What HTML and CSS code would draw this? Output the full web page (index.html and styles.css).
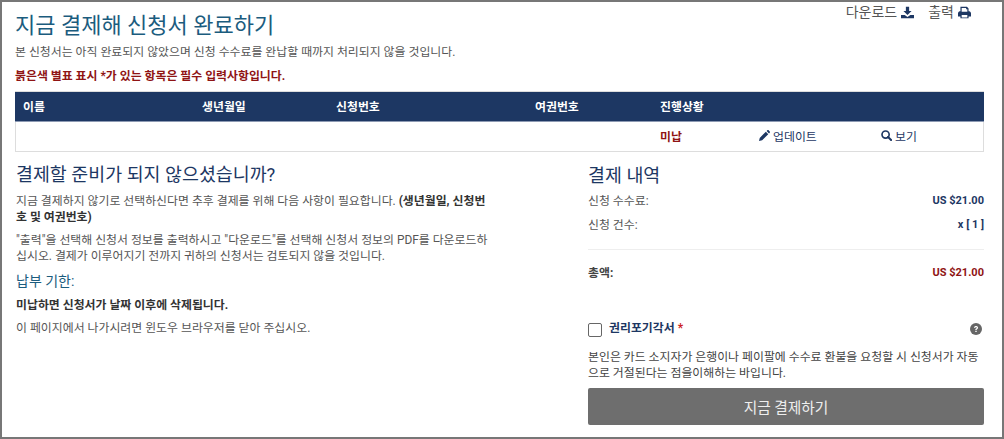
FILE: index.html
```html
<!DOCTYPE html>
<html lang="ko">
<head>
    <meta charset="UTF-8">
    <meta name="viewport" content="width=device-width, initial-scale=1.0">
    <title>지금 결제해 신청서 완료하기</title>
    <link rel="stylesheet" href="styles.css">
</head>
<body>
    <div class="page">
        <div class="tools">
            <a class="tool">다운로드
                <svg class="tool-icon" viewBox="0 0 16 16"><path d="M6 1h4v5h3l-5 5-5-5h3z"/><path d="M0 11h4.500l3.500 2.500 3.500-2.500H16v4H0z"/></svg>
            </a>
            <a class="tool">출력
                <svg class="tool-icon" viewBox="0 0 16 16"><path fill-rule="evenodd" d="M3 1h8l2 2v3.500c1.500 0 3 .8 3 2.500v4h-3v2H3v-2H0V9c0-1.700 1.500-2.500 3-2.500zM4.500 2.500V7h7V4h-1.500V2.500zM4.500 11v3h7v-3z"/></svg>
            </a>
        </div>
        <h1>지금 결제해 신청서 완료하기</h1>
        <p class="intro">본 신청서는 아직 완료되지 않았으며 신청 수수료를 완납할 때까지 처리되지 않을 것입니다.</p>
        <p class="required-note">붉은색 별표 표시 *가 있는 항목은 필수 입력사항입니다.</p>

        <div class="app-table">
            <div class="app-row app-head">
                <span>이름</span>
                <span>생년월일</span>
                <span>신청번호</span>
                <span>여권번호</span>
                <span>진행상황</span>
                <span></span>
                <span></span>
            </div>
            <div class="app-row app-body">
                <span></span>
                <span></span>
                <span></span>
                <span></span>
                <span class="unpaid">미납</span>
                <a class="row-link">
                    <svg class="row-icon" viewBox="0 0 12 12"><path d="M0 12l.8-3.400L7.500 1.900l2.600 2.600-6.700 6.700zM8.300 1.100l.8-.8c.4-.4 1-.4 1.400 0l1.200 1.200c.4.400.4 1 0 1.400l-.8.8z"/></svg>
                    업데이트
                </a>
                <a class="row-link">
                    <svg class="row-icon" viewBox="0 0 12 12"><circle cx="5" cy="5" r="3.900" fill="none" stroke="currentColor" stroke-width="1.800"/><path d="M7.700 7.700L11 11" stroke="currentColor" stroke-width="2.200" stroke-linecap="round"/></svg>
                    보기
                </a>
            </div>
        </div>

        <div class="columns">
            <div class="left-col">
                <h2>결제할 준비가 되지 않으셨습니까?</h2>
                <p>지금 결제하지 않기로 선택하신다면 추후 결제를 위해 다음 사항이 필요합니다. <b>(생년월일, 신청번호 및 여권번호)</b></p>
                <p>"출력"을 선택해 신청서 정보를 출력하시고 "다운로드"를 선택해 신청서 정보의 PDF를 다운로드하십시오. 결제가 이루어지기 전까지 귀하의 신청서는 검토되지 않을 것입니다.</p>
                <h3>납부 기한:</h3>
                <p><b>미납하면 신청서가 날짜 이후에 삭제됩니다.</b></p>
                <p>이 페이지에서 나가시려면 윈도우 브라우저를 닫아 주십시오.</p>
            </div>
            <div class="right-col">
                <h2 class="summary-title">결제 내역</h2>
                <div class="line"><span>신청 수수료:</span><b class="amount">US $21.00</b></div>
                <div class="line"><span>신청 건수:</span><b class="amount">x [ 1 ]</b></div>
                <hr>
                <div class="line total"><b>총액:</b><b class="amount">US $21.00</b></div>
                <div class="waiver">
                    <span class="checkbox"></span>
                    <span class="waiver-label">권리포기각서<i>*</i></span>
                    <svg class="help" viewBox="0 0 12 12"><circle cx="6" cy="6" r="6"/><path d="M4 4.700C4 3.500 5 3 6 3s2.100.6 2.100 1.700c0 1.500-1.500 1.400-1.500 2.300H5.300c0-1.700 1.400-1.500 1.400-2.300 0-.4-.3-.6-.7-.6s-.7.3-.7.8zM5.300 7.700h1.400V9H5.300z" fill="#fff"/></svg>
                </div>
                <p class="waiver-text">본인은 카드 소지자가 은행이나 페이팔에 수수료 환불을 요청할 시 신청서가 자동으로 거절된다는 점을이해하는 바입니다.</p>
                <button class="pay-btn">지금 결제하기</button>
            </div>
        </div>
    </div>
</body>
</html>
```
FILE: styles.css
```css
* {
    box-sizing: border-box;
    margin: 0;
    padding: 0;
}

body {
    font-family: Roboto, "Noto Sans CJK KR", sans-serif;
    font-size: 11.9px;
    color: #555;
    background: #fff;
    overflow: hidden;
}

.page {
    position: relative;
    width: 1004px;
    height: 439px;
    border: 2px solid #777;
    padding: 11px 18px 0 13px;
}

.tools {
    position: absolute;
    top: 2px;
    right: 31px;
    display: flex;
    gap: 14px;
}

.tool {
    display: flex;
    align-items: center;
    gap: 4px;
    font-size: 14px;
    line-height: 16px;
    color: #555;
}

.tool-icon {
    width: 13px;
    height: 13px;
    fill: #1d3763;
}

h1 {
    font-size: 22px;
    font-weight: 400;
    line-height: 26px;
    color: #1b5c7e;
}

.intro {
    margin-top: 5px;
    line-height: 16px;
}

.required-note {
    margin-top: 8px;
    line-height: 16px;
    font-weight: 700;
    color: #8f1414;
}

.app-table {
    margin-top: 7px;
    border: 1px solid #ddd;
}

.app-row {
    display: grid;
    grid-template-columns: 179px 134px 199px 125px 99px 122px 1fr;
    align-items: center;
    padding-left: 8px;
}

.app-head {
    height: 30px;
    margin: 0 -1px;
    padding-bottom: 2px;
    background: #1d3763;
    border-bottom: 1px solid #8d9ab3;
    color: #fff;
    font-weight: 700;
}

.app-body {
    height: 29px;
    padding-left: 7px;
    padding-bottom: 2px;
}

.unpaid {
    font-weight: 700;
    color: #8f1414;
}

.row-link {
    display: flex;
    align-items: center;
    gap: 3px;
    color: #1d3763;
}

.row-icon {
    width: 11px;
    height: 11px;
    fill: #1d3763;
    color: #1d3763;
}

.columns {
    display: flex;
    justify-content: space-between;
    margin-top: 10px;
}

.left-col {
    width: 474px;
    padding-left: 1px;
}

.left-col p {
    margin-bottom: 7px;
    line-height: 16px;
}

.left-col b {
    color: #333;
}

h2 {
    font-size: 18.4px;
    font-weight: 400;
    line-height: 26px;
    color: #1d3763;
    margin-bottom: 5px;
}

h3 {
    font-size: 14px;
    font-weight: 400;
    line-height: 20px;
    color: #1b5c7e;
    margin-bottom: 6px;
}

.right-col {
    width: 396px;
    padding-top: 1px;
}

.summary-title {
    margin-bottom: 4px;
}

.line {
    display: flex;
    justify-content: space-between;
    line-height: 16px;
    margin-bottom: 8px;
}

.line b {
    color: #1d3763;
}

.line .amount {
    font-size: 11px;
}

hr {
    border: 0;
    border-top: 1px solid #eee;
    margin: 16px 0 15px;
}

.total b {
    color: #444;
}

.total .amount {
    color: #8f1414;
}

.waiver {
    display: flex;
    align-items: center;
    margin-top: 34px;
}

.checkbox {
    width: 14px;
    height: 14px;
    border: 1.5px solid #666;
    border-radius: 2px;
    margin-top: 8px;
}

.waiver-label {
    margin-left: 7px;
    flex: 1;
    font-weight: 700;
    color: #1d3763;
}

.waiver-label i {
    font-style: normal;
    color: #c22;
    margin-left: 3px;
}

.help {
    width: 12px;
    height: 12px;
    margin: 6px 2px 0 0;
    fill: #666;
}

.waiver-text {
    margin-top: 12px;
    line-height: 16px;
    color: #444;
}

.pay-btn {
    display: block;
    width: 100%;
    height: 37px;
    margin-top: 7px;
    border: 0;
    border-radius: 2px;
    background: #6e6e6e;
    color: #eee;
    font-family: inherit;
    font-size: 14.7px;
}
```
